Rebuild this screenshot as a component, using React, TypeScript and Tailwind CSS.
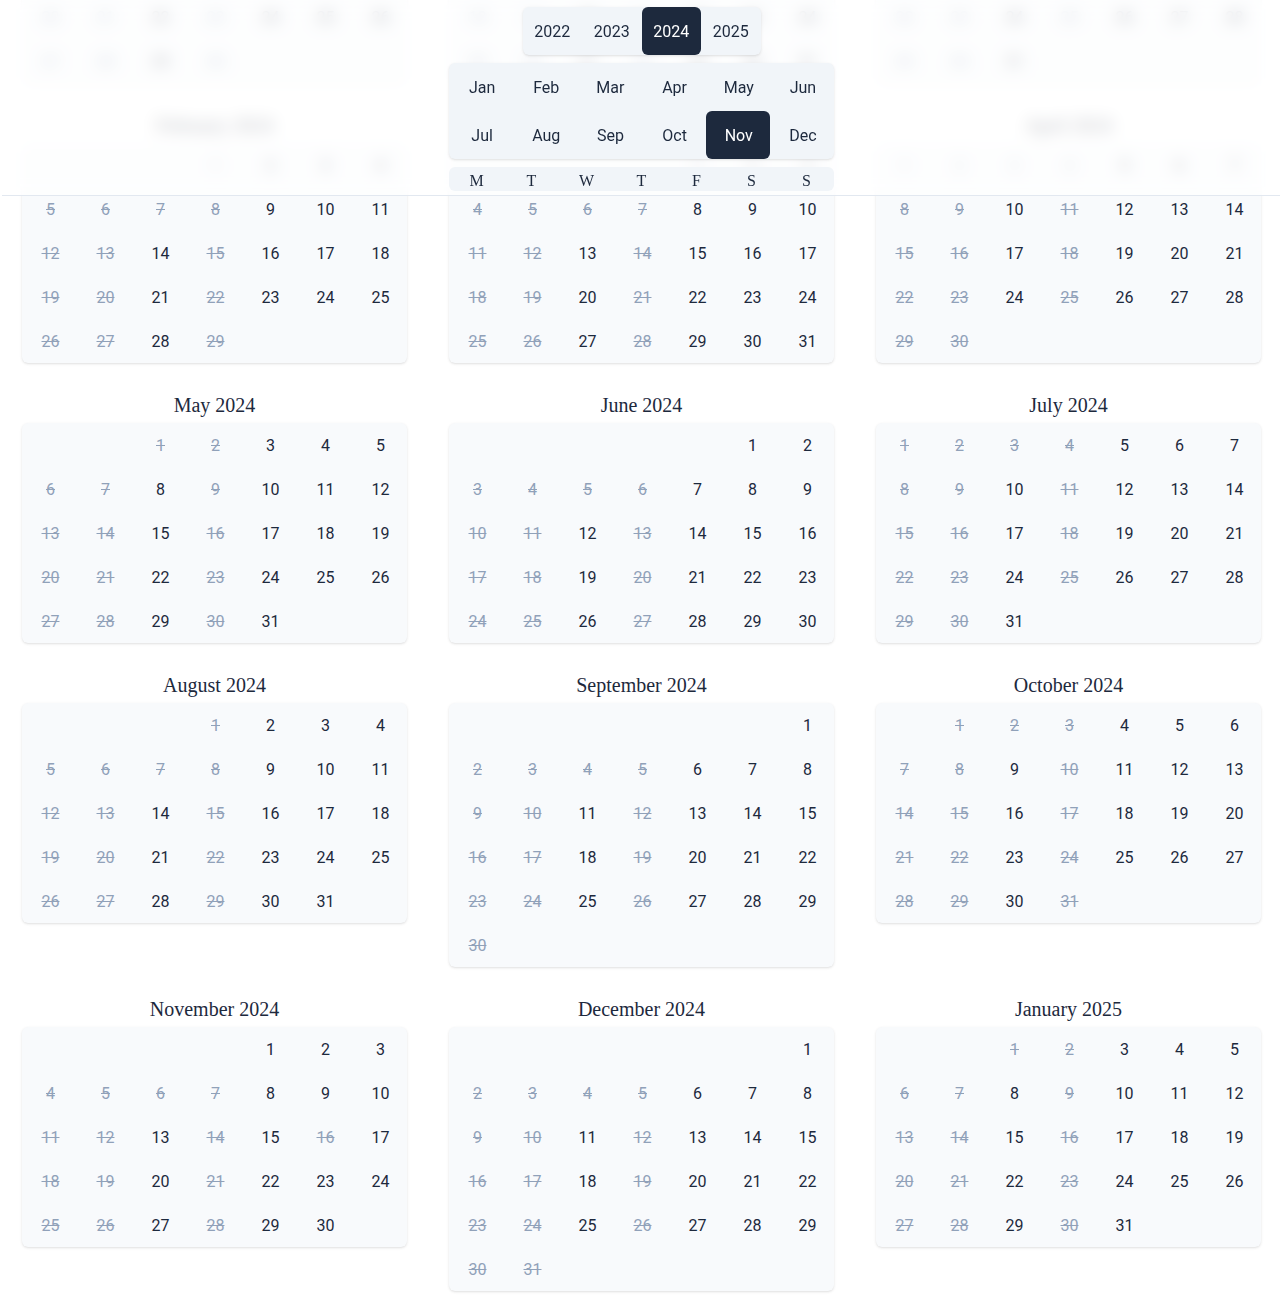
import React from "react";

const LONG = [
  "January", "February", "March", "April", "May", "June",
  "July", "August", "September", "October", "November", "December",
];
const SHORT = ["Jan", "Feb", "Mar", "Apr", "May", "Jun", "Jul", "Aug", "Sep", "Oct", "Nov", "Dec"];
const WEEK = ["M", "T", "W", "T", "F", "S", "S"];
const YEARS = [2022, 2023, 2024, 2025];

const MONTHS: { y: number; m: number }[] = [];
for (let i = 0; i < 15; i++) {
  const idx = 10 + i; // Nov 2023 onward
  MONTHS.push({ y: 2023 + Math.floor(idx / 12), m: idx % 12 });
}

function isCrossed(y: number, m: number, d: number, dow: number) {
  if (dow === 0 || dow === 1 || dow === 3) return true;
  if (dow === 2 && d <= 7) return true;
  if (y === 2024 && m === 10 && d === 16) return true;
  return false;
}

function MonthBlock({ y, m }: { y: number; m: number }) {
  const first = new Date(y, m, 1);
  const offset = (first.getDay() + 6) % 7;
  const days = new Date(y, m + 1, 0).getDate();
  const cells: (number | null)[] = [];
  for (let i = 0; i < offset; i++) cells.push(null);
  for (let d = 1; d <= days; d++) cells.push(d);
  return (
    <div className="flex flex-col gap-1">
      <div className="h-7 text-center text-xl leading-7 text-slate-800 font-['Liberation_Serif',serif]">
        {LONG[m]} {y}
      </div>
      <div className="grid grid-cols-7 rounded-md bg-slate-50 shadow-sm">
        {cells.map((d, i) => {
          if (d === null) return <div key={i} className="h-11" />;
          const dow = (offset + d - 1) % 7;
          const crossed = isCrossed(y, m, d, dow);
          return (
            <div
              key={i}
              className={
                crossed
                  ? "flex h-11 items-center justify-center pt-[2px] pl-[2px] text-base text-slate-400 line-through decoration-slate-400"
                  : "flex h-11 items-center justify-center pt-[2px] pl-[2px] text-base text-slate-800"
              }
            >
              {d}
            </div>
          );
        })}
      </div>
    </div>
  );
}

export default function App() {
  return (
    <div className="min-h-screen overflow-hidden bg-white font-['Roboto',sans-serif]">
      <header className="fixed top-0 left-[2px] right-0 z-10 border-b border-slate-200 bg-white/70 pl-5 backdrop-blur-sm">
        <div className="flex w-[1239px] flex-col items-center gap-2 pt-[7px] pb-1">
          <div className="flex rounded-md bg-slate-100 shadow-sm">
            {YEARS.map((yr) => (
              <button
                key={yr}
                className={
                  yr === 2024
                    ? "flex h-12 w-[59.5px] items-center justify-center rounded-md bg-slate-800 pt-[2px] text-base text-white"
                    : "flex h-12 w-[59.5px] items-center justify-center rounded-md pt-[2px] text-base text-slate-800"
                }
              >
                {yr}
              </button>
            ))}
          </div>
          <div className="grid w-[385px] grid-cols-6 rounded-md bg-slate-100 shadow-sm">
            {SHORT.map((s) => (
              <button
                key={s}
                className={
                  s === "Nov"
                    ? "flex h-12 items-center justify-center rounded-md bg-slate-800 pt-[2px] pl-[2px] text-base text-white"
                    : "flex h-12 items-center justify-center rounded-md pt-[2px] pl-[2px] text-base text-slate-800"
                }
              >
                {s}
              </button>
            ))}
          </div>
          <div className="grid h-6 w-[385px] grid-cols-7 rounded-md bg-slate-100 font-['Liberation_Serif',serif] text-slate-800">
            {WEEK.map((w, i) => (
              <div key={i} className="flex items-center justify-center pt-[2px] text-base">
                {w}
              </div>
            ))}
          </div>
        </div>
      </header>
      <main className="-mt-[169px] pl-[22px] pb-5">
        <div className="grid w-[1239px] grid-cols-3 items-start gap-x-[42px] gap-y-7">
          {MONTHS.map((mo) => (
            <MonthBlock key={`${mo.y}-${mo.m}`} y={mo.y} m={mo.m} />
          ))}
        </div>
      </main>
    </div>
  );
}
